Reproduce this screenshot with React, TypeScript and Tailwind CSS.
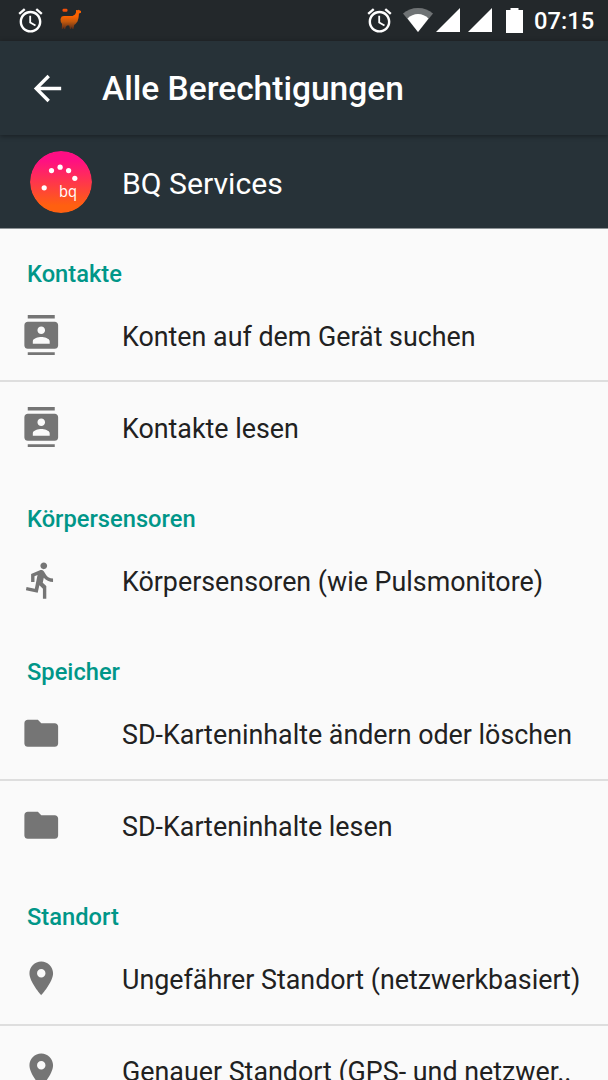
import React from "react";

const icons = {
  contacts:
    "M20 0H4v2h16V0zM4 24h16v-2H4v2zM20 4H4c-1.1 0-2 .9-2 2v12c0 1.1.9 2 2 2h16c1.1 0 2-.9 2-2V6c0-1.1-.9-2-2-2zm-8 2.75c1.24 0 2.25 1.01 2.25 2.25s-1.01 2.25-2.25 2.25S9.75 10.24 9.75 9 10.76 6.75 12 6.75zM17 17H7v-1.5c0-1.67 3.33-2.5 5-2.5s5 .83 5 2.5V17z",
  run: "M13.49 5.48c1.1 0 2-.9 2-2s-.9-2-2-2-2 .9-2 2 .9 2 2 2zm-3.6 13.9l1-4.4 2.1 2v6h2v-7.5l-2.1-2 .6-3c1.3 1.5 3.3 2.5 5.5 2.5v-2c-1.9 0-3.5-1-4.3-2.4l-1-1.6c-.4-.6-1-1-1.7-1-.3 0-.5.1-.8.1l-5.2 2.2v4.7h2v-3.4l1.8-.7-1.6 8.1-4.9-1-.4 2 7 1.4z",
  folder: "M10 4H4c-1.1 0-1.99.9-1.99 2L2 18c0 1.1.9 2 2 2h16c1.1 0 2-.9 2-2V8c0-1.1-.9-2-2-2h-8l-2-2z",
  place:
    "M12 2C8.13 2 5 5.13 5 9c0 5.25 7 13 7 13s7-7.75 7-13c0-3.87-3.13-7-7-7zm0 9.5c-1.38 0-2.5-1.12-2.5-2.5s1.12-2.5 2.5-2.5 2.5 1.12 2.5 2.5-1.12 2.5-2.5 2.5z",
};

const groups = [
  {
    title: "Kontakte",
    icon: icons.contacts,
    items: ["Konten auf dem Gerät suchen", "Kontakte lesen"],
  },
  {
    title: "Körpersensoren",
    icon: icons.run,
    items: ["Körpersensoren (wie Pulsmonitore)"],
  },
  {
    title: "Speicher",
    icon: icons.folder,
    items: ["SD-Karteninhalte ändern oder löschen", "SD-Karteninhalte lesen"],
  },
  {
    title: "Standort",
    icon: icons.place,
    items: ["Ungefährer Standort (netzwerkbasiert)", "Genauer Standort (GPS- und netzwer.."],
  },
];

function AlarmIcon() {
  return (
    <svg viewBox="0 0 24 24" className="w-[29px] h-[29px] shrink-0" fill="currentColor">
      <path d="M22 5.72l-4.6-3.86-1.29 1.53 4.6 3.86L22 5.72zM7.88 3.39L6.6 1.86 2 5.71l1.29 1.53 4.59-3.85zM12.5 8H11v6l4.75 2.85.75-1.23-4-2.37V8zM12 4c-4.97 0-9 4.03-9 9s4.02 9 9 9c4.97 0 9-4.03 9-9s-4.03-9-9-9zm0 16c-3.87 0-7-3.13-7-7s3.13-7 7-7 7 3.13 7 7-3.13 7-7 7z" />
    </svg>
  );
}

function SignalIcon() {
  return (
    <svg viewBox="0 0 24 24" className="w-6 h-6 shrink-0" fill="currentColor">
      <path d="M0 24H24V0z" />
    </svg>
  );
}

function StatusBar() {
  return (
    <div className="flex h-[41px] items-start bg-[#23282b] pl-4">
      <div className="flex flex-1 pt-[6px]">
        <AlarmIcon />
        {/* Llama notification */}
        <svg viewBox="0 0 22 22" className="ml-[15px] mt-[2px] w-[22px] h-[22px]">
          <defs>
            <linearGradient id="llama" gradientUnits="userSpaceOnUse" x1="0" y1="1" x2="0" y2="22">
              <stop offset="0.35" stopColor="#fb6100" />
              <stop offset="0.6" stopColor="#c2590d" />
              <stop offset="1" stopColor="#4a251a" />
            </linearGradient>
          </defs>
          <rect x="2.5" y="0.7" width="5" height="3" rx="1.2" fill="#f24f0a" />
          <path
            fill="url(#llama)"
            d="M16 2l1.500.3 1-.6 1 .6 1.500.7v1.700l-2 .8-.5 4.500-1 3.500-2 2.500-1.300 1-.7 4h-1.200l-.5-2-.8 2H10l-.8-3.500H7l-1.300 1.500-.5 2H4l-.6-2-.6 2h-1l.2-5-1.200-2-.3-3 1.200-2.500L4 8h8.500l2.500-1.500 1-2z"
          />
        </svg>
      </div>
      <div className="flex pt-[6px]">
        <AlarmIcon />
      </div>
      <svg viewBox="0 0 30 24" className="ml-[9px] mt-2 w-[30px] h-6" fill="currentColor">
        <path fillOpacity="0.35" d="M15 24L0 5.500C4 2 9 0 15 0s11 2 15 5.500z" />
        <path d="M15 24L4.500 10.500C7.500 7.500 11 6 15 6s7.500 1.500 10.500 4.500z" />
      </svg>
      <div className="flex gap-2 ml-[3px] pt-2">
        <SignalIcon />
        <SignalIcon />
      </div>
      <svg viewBox="0 0 17 25" className="ml-[14px] mt-2 w-[17px] h-[25px]" fill="currentColor">
        <path d="M4.500 0h8v2H17v23H0V2h4.500z" />
      </svg>
      <span className="ml-[11px] mr-[14px] w-[60px] whitespace-nowrap text-[23.7px] leading-[42px] font-medium">
        07:15
      </span>
    </div>
  );
}

function AppLogo() {
  return (
    <svg viewBox="0 0 62 62" className="w-[62px] h-[62px] shrink-0 rounded-full">
      <defs>
        <linearGradient id="bq" x1="0" y1="0" x2="0" y2="1">
          <stop offset="0.15" stopColor="#ff0f83" />
          <stop offset="0.5" stopColor="#ff364c" />
          <stop offset="0.88" stopColor="#ff6010" />
        </linearGradient>
      </defs>
      <circle cx="31" cy="31" r="31" fill="url(#bq)" />
      <g fill="#fff">
        <circle cx="14.2" cy="36.8" r="2.6" />
        <circle cx="21.5" cy="19.6" r="2.6" />
        <circle cx="30.1" cy="16.2" r="2.6" />
        <circle cx="38.6" cy="19.6" r="2.6" />
        <circle cx="44.8" cy="27.3" r="2.6" />
        <text
          x="29"
          y="45.8"
          fontSize="15.5"
          fontFamily="Open Sans, sans-serif"
          textLength="18"
          lengthAdjust="spacingAndGlyphs"
        >
          bq
        </text>
      </g>
    </svg>
  );
}

export default function App() {
  return (
    <div className="h-[1080px] w-[608px] overflow-hidden bg-[#fafafa] font-['Roboto',sans-serif] text-white">
      <StatusBar />

      {/* Toolbar */}
      <header className="relative flex h-[94px] items-center bg-[#273238] pl-[27px] shadow-[0_1px_5px_rgba(0,0,0,0.4)]">
        <svg viewBox="0 0 24 24" className="w-[41px] h-[41px]" fill="currentColor">
          <path d="M20 11H7.830l5.590-5.590L12 4l-8 8 8 8 1.410-1.410L7.830 13H20v-2z" />
        </svg>
        <h1 className="ml-[34px] pt-[2px] text-[33.5px] leading-[40px] font-medium whitespace-nowrap">
          Alle Berechtigungen
        </h1>
      </header>

      {/* App header */}
      <div className="flex h-[94.3px] items-center border-b border-[#8d9396] bg-[#273238] pl-[30px]">
        <AppLogo />
        <span className="ml-[30px] pt-1 text-[30.2px] leading-[36px]">BQ Services</span>
      </div>

      {/* Permission groups */}
      <main>
        {groups.map((group) => (
          <section key={group.title}>
            <h2 className="h-[61.1px] pt-[30.5px] pl-[27px] text-[23.7px] leading-[28px] font-medium text-[#009688]">
              {group.title}
            </h2>
            <ul>
              {group.items.map((item) => (
                <li
                  key={item}
                  className="flex h-[92px] items-center border-b-2 border-[#dedede] pb-[0.4px] pl-[21px] last:border-transparent"
                >
                  <svg viewBox="0 0 24 24" className="w-[40.5px] h-[40.5px] shrink-0" fill="#757575">
                    <path d={group.icon} />
                  </svg>
                  <span className="ml-[60.5px] pt-[4px] text-[26.84px] leading-[32px] whitespace-nowrap text-[#212121]">
                    {item}
                  </span>
                </li>
              ))}
            </ul>
          </section>
        ))}
      </main>
    </div>
  );
}
